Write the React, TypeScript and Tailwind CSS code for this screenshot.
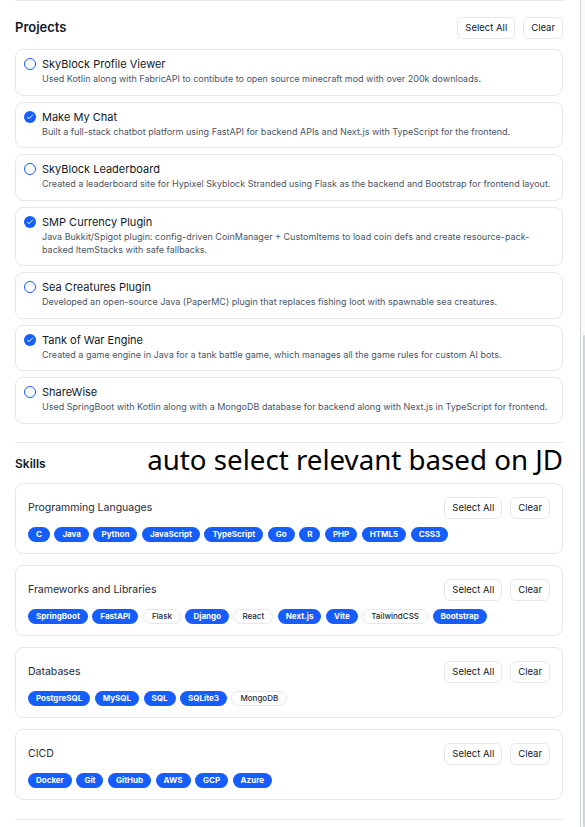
import { Check } from "lucide-react";

type Project = { title: string; desc: string; on: boolean };
type Group = { name: string; items: [string, boolean][] };

const projects: Project[] = [
  { title: "SkyBlock Profile Viewer", on: false, desc: "Used Kotlin along with FabricAPI to contibute to open source minecraft mod with over 200k downloads." },
  { title: "Make My Chat", on: true, desc: "Built a full-stack chatbot platform using FastAPI for backend APIs and Next.js with TypeScript for the frontend." },
  { title: "SkyBlock Leaderboard", on: false, desc: "Created a leaderboard site for Hypixel Skyblock Stranded using Flask as the backend and Bootstrap for frontend layout." },
  { title: "SMP Currency Plugin", on: true, desc: "Java Bukkit/Spigot plugin: config-driven CoinManager + CustomItems to load coin defs and create resource-pack-backed ItemStacks with safe fallbacks." },
  { title: "Sea Creatures Plugin", on: false, desc: "Developed an open-source Java (PaperMC) plugin that replaces fishing loot with spawnable sea creatures." },
  { title: "Tank of War Engine", on: true, desc: "Created a game engine in Java for a tank battle game, which manages all the game rules for custom AI bots." },
  { title: "ShareWise", on: false, desc: "Used SpringBoot with Kotlin along with a MongoDB database for backend along with Next.js in TypeScript for frontend." },
];

const groups: Group[] = [
  {
    name: "Programming Languages",
    items: [["C", true], ["Java", true], ["Python", true], ["JavaScript", true], ["TypeScript", true], ["Go", true], ["R", true], ["PHP", true], ["HTML5", true], ["CSS3", true]],
  },
  {
    name: "Frameworks and Libraries",
    items: [["SpringBoot", true], ["FastAPI", true], ["Flask", false], ["Django", true], ["React", false], ["Next.js", true], ["Vite", true], ["TailwindCSS", false], ["Bootstrap", true]],
  },
  {
    name: "Databases",
    items: [["PostgreSQL", true], ["MySQL", true], ["SQL", true], ["SQLite3", true], ["MongoDB", false]],
  },
  {
    name: "CICD",
    items: [["Docker", true], ["Git", true], ["GitHub", true], ["AWS", true], ["GCP", true], ["Azure", true]],
  },
];

function Btn({ children }: { children: string }) {
  return (
    <button className="h-[22px] px-[7px] rounded-md border border-gray-200 bg-white text-[9.5px] text-gray-900 leading-none">
      {children}
    </button>
  );
}

function Actions() {
  return (
    <div className="flex gap-2">
      <Btn>Select All</Btn>
      <Btn>Clear</Btn>
    </div>
  );
}

function Radio({ on }: { on: boolean }) {
  if (on)
    return (
      <span className="mt-[1px] w-3 h-3 shrink-0 rounded-full bg-blue-600 flex items-center justify-center">
        <Check size={8} strokeWidth={3} className="text-white" />
      </span>
    );
  return <span className="mt-[1px] w-3 h-3 shrink-0 rounded-full border-[1.5px] border-blue-600 bg-white" />;
}

function Chip({ label, on }: { label: string; on: boolean }) {
  return on ? (
    <span className="h-[15px] px-2 rounded-full bg-blue-600 text-white text-[8px] font-bold flex items-center">{label}</span>
  ) : (
    <span className="h-[15px] px-2 rounded-full border border-gray-200 bg-white text-gray-800 text-[8px] font-medium flex items-center">{label}</span>
  );
}

export default function App() {
  return (
    <div className="flex h-[827px] overflow-hidden bg-white font-['Inter',sans-serif]">
      <div className="flex-1 pl-[15px] pr-[17px]">
        <hr className="border-gray-200" />

        <div className="flex items-center justify-between pt-4">
          <h2 className="text-[13px] font-semibold text-gray-900">Projects</h2>
          <Actions />
        </div>

        <div className="mt-[10px] flex flex-col gap-[6px]">
          {projects.map((p) => (
            <div key={p.title} className="flex gap-[6px] rounded-lg border border-gray-200 pl-2 pr-2 pt-[7px] pb-[9.5px]">
              <Radio on={p.on} />
              <div>
                <div className="text-[11px] leading-[15px] text-gray-900">{p.title}</div>
                <div className="text-[9px] leading-[13px] text-gray-600">{p.desc}</div>
              </div>
            </div>
          ))}
        </div>

        <hr className="mt-[18px] border-gray-200" />

        <div className="flex items-end justify-between">
          <h2 className="mb-[2px] text-[12px] font-semibold text-gray-900">Skills</h2>
          <span className="font-['Noto_Sans',sans-serif] text-[27.7px] leading-[32px] text-black">auto select relevant based on JD</span>
        </div>

        <div className="mt-2 flex flex-col gap-[11px]">
          {groups.map((g) => (
            <div key={g.name} className="rounded-lg border border-gray-200 px-3 pt-[13px] pb-[11px]">
              <div className="flex items-center justify-between">
                <span className="text-[10.5px] text-gray-800">{g.name}</span>
                <Actions />
              </div>
              <div className="mt-2 flex flex-wrap gap-[4.5px]">
                {g.items.map(([label, on]) => (
                  <Chip key={label} label={label} on={on} />
                ))}
              </div>
            </div>
          ))}
        </div>

        <hr className="mt-[19px] border-gray-200" />
      </div>

      {/* scrollbar track */}
      <div className="w-[5px] border-l border-gray-300 bg-gray-50 flex flex-col">
        <div className="h-[335px]" />
        <div className="flex-1 ml-[2px] rounded-full bg-gray-300" />
      </div>
    </div>
  );
}
